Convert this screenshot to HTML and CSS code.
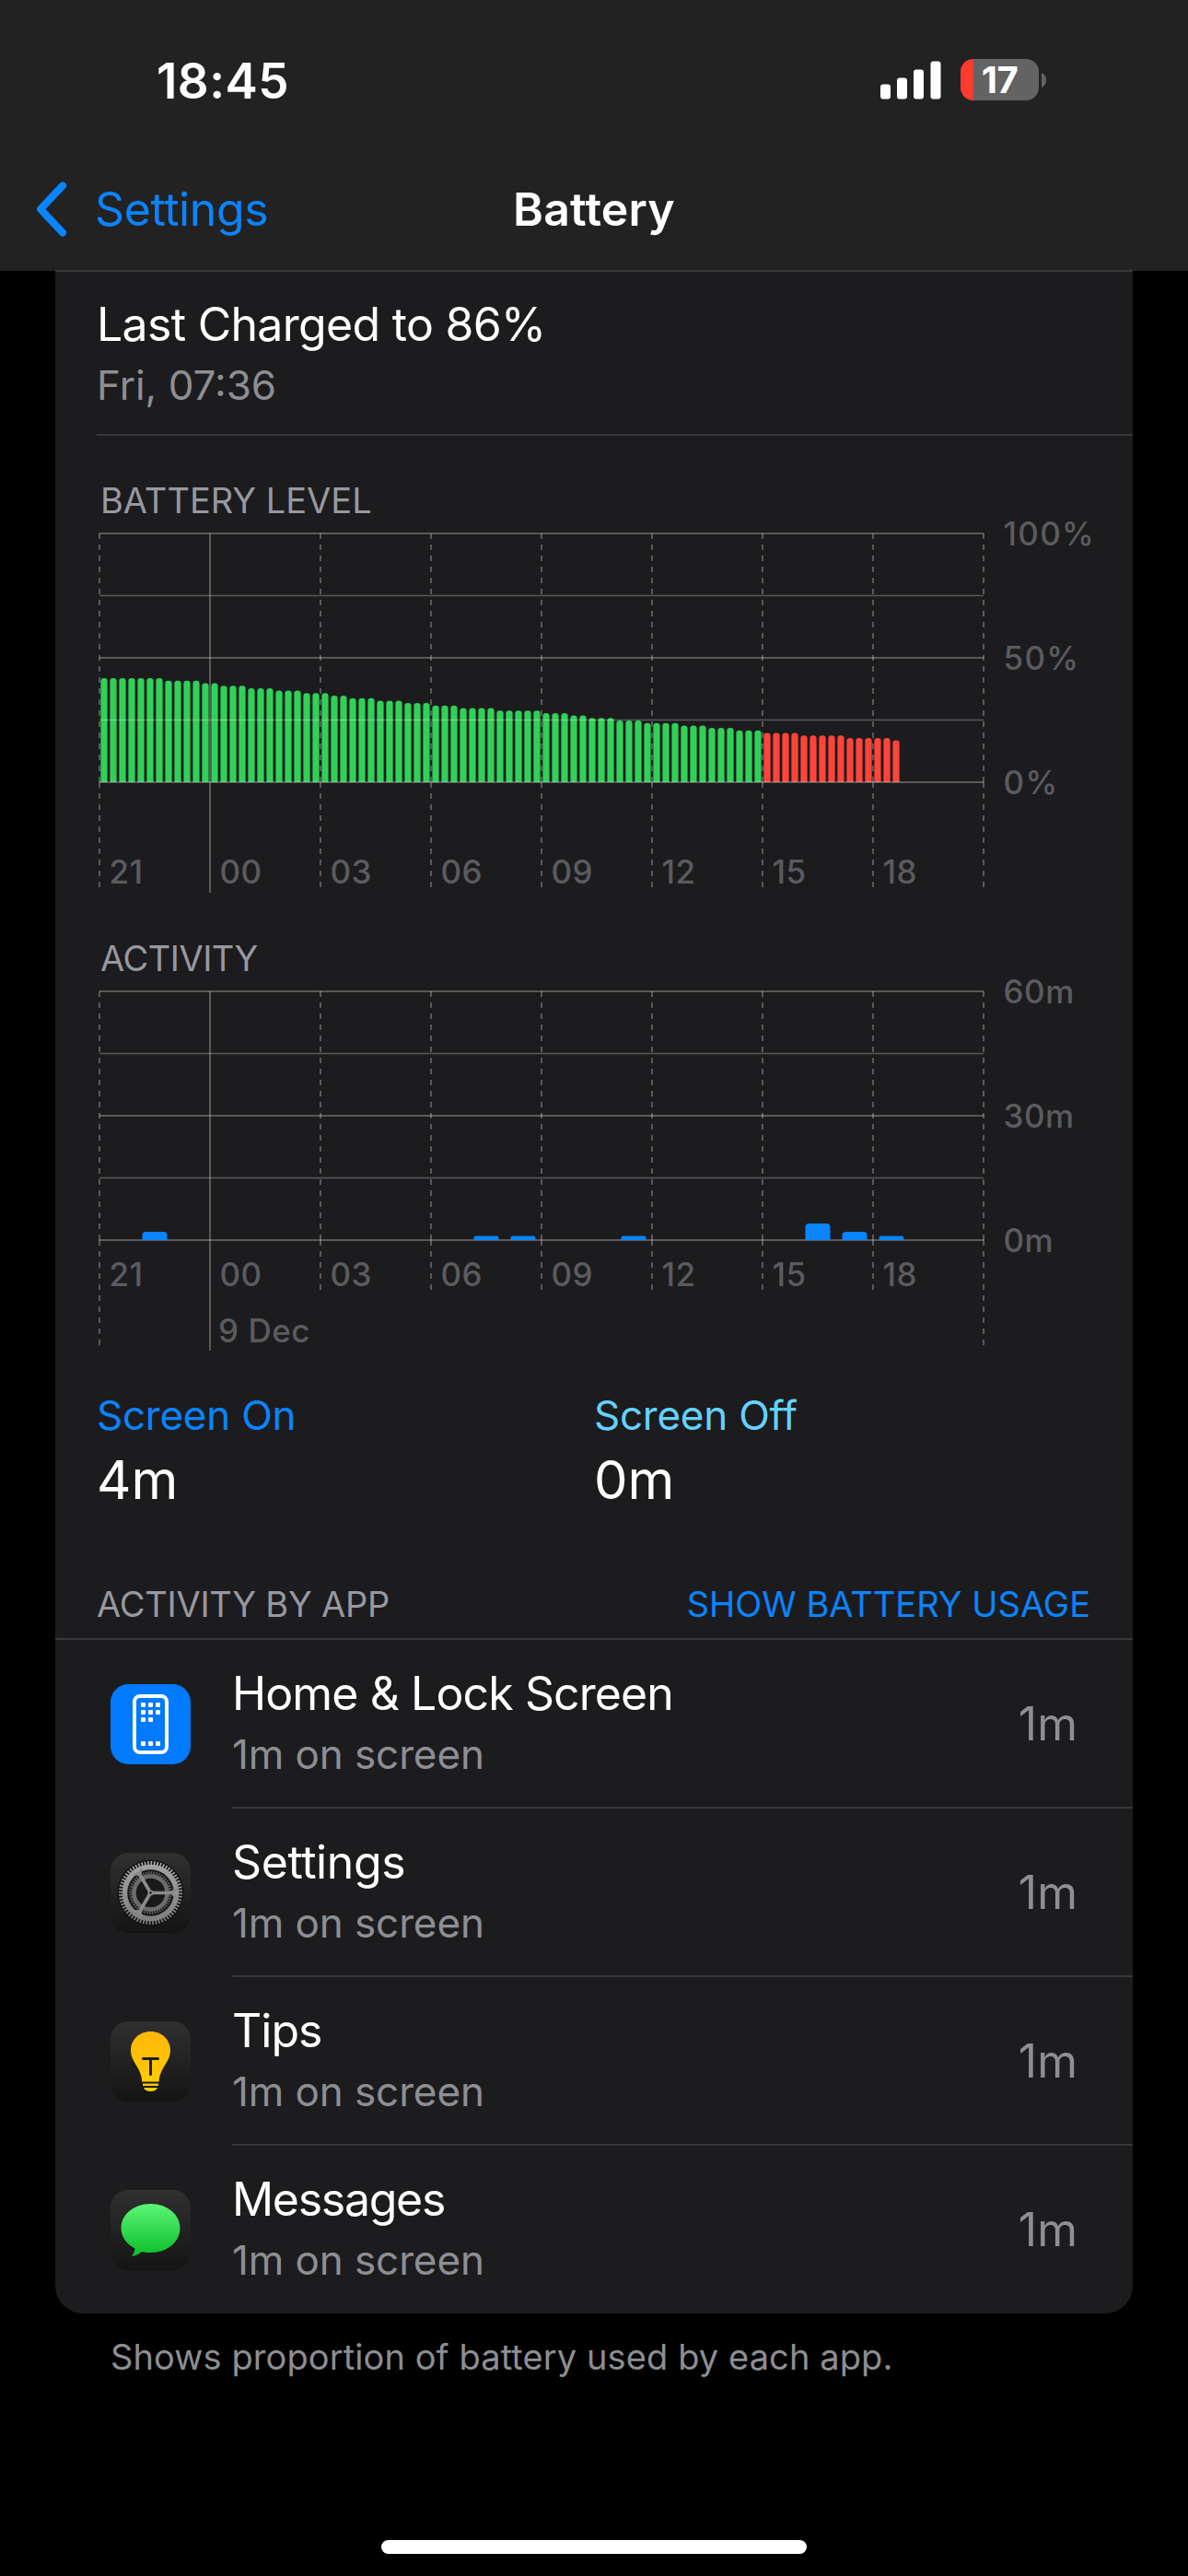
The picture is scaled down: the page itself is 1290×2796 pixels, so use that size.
FILE: index.html
```html
<!DOCTYPE html>
<html lang="en">
<head>
<meta charset="utf-8">
<title>Battery</title>
<link rel="stylesheet" href="styles.css">
</head>
<body>
<div class="screen">
  <header class="top">
    <div class="status">
      <span class="clock">18:45</span>
      <div class="status-icons">
        <svg class="signal" width="66" height="42" viewBox="0 0 66 42" fill="#fff">
          <rect x="0" y="25.500" width="11" height="16" rx="3"/>
          <rect x="18" y="18.500" width="11" height="23" rx="3"/>
          <rect x="36" y="9.500" width="11" height="32" rx="3"/>
          <rect x="54.500" y="0.500" width="11" height="41" rx="3"/>
        </svg>
        <div class="battery"><span class="charge">17</span></div>
        <svg class="nub" width="5" height="16" viewBox="0 0 5 16"><path d="M0 0C3.500 1.500 5 4.500 5 8S3.500 14.500 0 16Z" fill="#636363"/></svg>
      </div>
    </div>
    <nav class="nav">
      <a class="back">
        <svg width="36" height="60" viewBox="0 0 36 60"><path d="M30 4.500 6 30 30 55.500" fill="none" stroke="#0a84ff" stroke-width="8" stroke-linecap="round" stroke-linejoin="round"/></svg>
        <span class="t-back">Settings</span>
      </a>
      <h1 class="title">Battery</h1>
      <span></span>
    </nav>
  </header>

  <main class="card">
    <section class="charged">
      <div class="headline t-charged">Last Charged to 86%</div>
      <div class="sub">Fri, 07:36</div>
    </section>

    <section class="charts">
      <h2 class="caption">BATTERY LEVEL</h2>
      <svg class="chart level-chart" id="level" width="1125" height="419" viewBox="105 565 1125 419"></svg>
      <h2 class="caption t-activity">ACTIVITY</h2>
      <svg class="chart activity-chart" id="activity" width="1125" height="420" viewBox="105 1062 1125 420"></svg>
    </section>

    <section class="totals">
      <div class="total">
        <div class="sub on">Screen On</div>
        <div class="amount">4m</div>
      </div>
      <div class="total">
        <div class="sub off">Screen Off</div>
        <div class="amount">0m</div>
      </div>
    </section>

    <section class="apps">
      <div class="apps-head">
        <h2 class="caption t-byapp">ACTIVITY BY APP</h2>
        <a class="caption link">SHOW BATTERY USAGE</a>
      </div>
      <ul class="list">
        <li class="row">
          <svg class="icon" viewBox="0 0 87 87">
            <rect width="87" height="87" rx="19.500" fill="#007aff"/>
            <rect x="26" y="13" width="35" height="61" rx="6" fill="none" stroke="#fff" stroke-width="4"/>
            <g fill="#fff">
              <rect x="33" y="20" width="5" height="5" rx="1"/><rect x="41" y="20" width="5" height="5" rx="1"/><rect x="49" y="20" width="5" height="5" rx="1"/>
              <rect x="33" y="28" width="5" height="5" rx="1"/><rect x="41" y="28" width="5" height="5" rx="1"/><rect x="49" y="28" width="5" height="5" rx="1"/>
              <rect x="33" y="36" width="5" height="5" rx="1"/><rect x="41" y="36" width="5" height="5" rx="1"/>
              <rect x="33" y="62" width="5" height="5" rx="1"/><rect x="41" y="62" width="5" height="5" rx="1"/><rect x="49" y="62" width="5" height="5" rx="1"/>
            </g>
          </svg>
          <div class="row-body">
            <div class="row-text"><div class="headline t-home">Home &amp; Lock Screen</div><div class="sub t-on">1m on screen</div></div>
            <div class="value">1m</div>
          </div>
        </li>
        <li class="row">
          <svg class="icon" viewBox="0 0 87 87">
            <defs>
              <linearGradient id="tile" x1="0" y1="0" x2="0" y2="1"><stop offset="0" stop-color="#303030"/><stop offset="1" stop-color="#141414"/></linearGradient>
              <linearGradient id="steel" gradientUnits="userSpaceOnUse" x1="0" y1="8" x2="0" y2="79"><stop offset="0" stop-color="#a6a6a6"/><stop offset="1" stop-color="#7c7c7c"/></linearGradient>
            </defs>
            <rect width="87" height="87" rx="19.500" fill="url(#tile)"/>
            <circle cx="43.500" cy="43.500" r="36" fill="#111"/>
            <circle cx="43.500" cy="43.500" r="27.500" fill="#191919"/>
            <g fill="none" stroke="url(#steel)">
              <circle cx="43.500" cy="43.500" r="21.500" stroke="#5c5c5c" stroke-width="3.500" stroke-dasharray="1.500 1.300"/>
              <circle cx="43.500" cy="43.500" r="18" stroke="#6c6c6c" stroke-width="4.500"/>
              <circle cx="43.500" cy="43.500" r="32" stroke-width="5" pathLength="120" stroke-dasharray="1 1"/>
              <circle cx="43.500" cy="43.500" r="28" stroke-width="5.500"/>
              <path d="M43.500 43.500 70 43.500M43.500 43.500 30 20.500M43.500 43.500 30 66.500" stroke-width="3.600" stroke="#8c8c8c"/>
              <path d="M72 38 66 43.500 72 49M25 23.500 32 23.500 34 17M25 63.500 32 63.500 34 70" stroke-width="2.400" stroke="#8a8a8a"/>
            </g>
            <circle cx="43.500" cy="43.500" r="3" fill="#8c8c8c"/>
            <circle cx="43.500" cy="43.500" r="1.300" fill="#1a1a1a"/>
          </svg>
          <div class="row-body">
            <div class="row-text"><div class="headline t-settings">Settings</div><div class="sub t-on">1m on screen</div></div>
            <div class="value">1m</div>
          </div>
        </li>
        <li class="row">
          <svg class="icon" viewBox="0 0 87 87">
            <defs><linearGradient id="amber" x1="0" y1="0" x2="0" y2="1"><stop offset="0" stop-color="#ffb50a"/><stop offset="1" stop-color="#ffcc00"/></linearGradient></defs>
            <rect width="87" height="87" rx="19.500" fill="url(#tile)"/>
            <path d="M43.500 11C31 11 22 20 22 31.500C22 44 33.500 50 34.300 65.500H52.700C53.500 50 65 44 65 31.500C65 20 56 11 43.500 11Z" fill="url(#amber)"/>
            <path d="M35 67.500H52V70H35ZM36 72H51C50 74.700 47 76 43.500 76S37 74.700 36 72Z" fill="#ffcc00"/>
            <path d="M35.500 40.500H51.500M43.500 40.500V57.500" fill="none" stroke="#211f18" stroke-width="3" stroke-linecap="round"/>
          </svg>
          <div class="row-body">
            <div class="row-text"><div class="headline t-tips">Tips</div><div class="sub t-on">1m on screen</div></div>
            <div class="value">1m</div>
          </div>
        </li>
        <li class="row">
          <svg class="icon" viewBox="0 0 87 87">
            <defs><linearGradient id="mint" x1="0" y1="0" x2="0" y2="1"><stop offset="0" stop-color="#5bf675"/><stop offset="1" stop-color="#0bbd29"/></linearGradient></defs>
            <rect width="87" height="87" rx="19.500" fill="url(#tile)"/>
            <path d="M43.500 15C25.500 15 11.500 26.500 11.500 41.500C11.500 50.500 17 58.500 26.500 63.500C26.500 66.500 25 69.500 22.800 72C27.500 71.500 31 69.500 34 67C37 67.600 40 68 43.500 68C61.500 68 75.500 56.500 75.500 41.500S61.500 15 43.500 15Z" fill="url(#mint)"/>
          </svg>
          <div class="row-body">
            <div class="row-text"><div class="headline t-messages">Messages</div><div class="sub t-on">1m on screen</div></div>
            <div class="value">1m</div>
          </div>
        </li>
      </ul>
    </section>
  </main>

  <p class="note">Shows proportion of battery used by each app.</p>
  <div class="home-bar"></div>
</div>
<script src="charts.js"></script>
</body>
</html>
```
FILE: styles.css
```css
* { box-sizing: border-box; margin: 0; padding: 0; }
html, body { background: #000; }
body {
  width: 1290px;
  font-family: Inter, "Liberation Sans", sans-serif;
  color: #fff;
  font-weight: 400;
  -webkit-font-smoothing: antialiased;
}
.screen {
  width: 1290px;
  height: 2796px;
  display: flex;
  flex-direction: column;
  align-items: center;
  overflow: hidden;
}

/* header */
.top { width: 100%; height: 294px; flex: none; background: #222; }
.status {
  height: 176px;
  padding: 0 154px 0 170px;
  display: flex;
  justify-content: space-between;
  align-items: flex-start;
}
.clock { margin-top: 56px; font-size: 53px; line-height: 64px; font-weight: 600; letter-spacing: 0.4px; }
.status-icons { margin-top: 64px; height: 45px; display: flex; align-items: center; }
.signal { margin-right: 21px; }
.battery {
  width: 85px;
  height: 45px;
  border-radius: 14px;
  background: linear-gradient(90deg, #ff3b30 14.500px, #636363 14.500px);
  display: flex;
  align-items: center;
  justify-content: center;
}
.charge { font-size: 40px; line-height: 45px; font-weight: 700; letter-spacing: -0.5px; }
.nub { margin-left: 3px; }
.nav {
  height: 102px;
  display: grid;
  grid-template-columns: 1fr auto 1fr;
  align-items: center;
  padding: 0 38px;
}
.back { display: flex; align-items: center; gap: 29px; color: #0a84ff; font-size: 50px; line-height: 60px; letter-spacing: -0.4px; }
.title { font-size: 50px; line-height: 60px; font-weight: 600; letter-spacing: 0.2px; }

/* card */
.card {
  width: 1170px;
  height: 2218px;
  flex: none;
  margin-top: -1px;
  background: #1c1c1e;
  border-top: 2px solid #38383a;
  border-radius: 0 0 30px 30px;
  display: flex;
  flex-direction: column;
}
.headline { font-size: 50px; line-height: 60px; white-space: nowrap; }
.sub { font-size: 44px; line-height: 54px; color: #8e8e93; white-space: nowrap; }
.caption { font-size: 38px; line-height: 46px; font-weight: 400; color: #98989f; white-space: nowrap; }
.t-charged { letter-spacing: -0.7px; }
.t-activity { letter-spacing: -0.5px; }
.t-byapp { letter-spacing: -0.25px; }
.t-home { letter-spacing: -0.9px; }
.t-settings { letter-spacing: -0.4px; }
.t-tips { letter-spacing: -1px; }
.t-messages { letter-spacing: -1.3px; }
.t-on { letter-spacing: -0.1px; }

.charged { height: 178px; margin-left: 45px; padding: 27px 0 0; border-bottom: 2px solid #38383a; }
.charged .sub { margin-top: 9px; }

.charts { padding: 47px 0 0 45px; }
.charts .caption { padding-left: 4px; }
.chart { display: block; overflow: visible; }
.level-chart { margin-top: -1px; margin-bottom: 33px; }
.activity-chart { margin-top: -1px; margin-bottom: 27px; }
.grid { stroke: #fff; stroke-opacity: 0.27; fill: none; stroke-width: 2; }
.dashed { stroke-dasharray: 6 6; }
.minor { stroke-width: 1.300; }
.axis { font-size: 35px; font-weight: 500; fill: #5b5b5f; letter-spacing: 0.5px; }
.percent { letter-spacing: 1.3px; }
.green { fill: #30d158; }
.red { fill: #ff453a; }
.blue { fill: #0a84ff; }

.totals { display: grid; grid-template-columns: 540px 1fr; padding-left: 45px; }
.totals .sub { letter-spacing: -0.25px; }
.totals .on { color: #0a84ff; }
.totals .off { color: #64d2ff; }
.amount { font-size: 58px; line-height: 70px; margin-top: 8px; }

.apps { margin-top: auto; }
.apps-head {
  display: flex;
  justify-content: space-between;
  padding: 0 46px 14px 45px;
  border-bottom: 2px solid #38383a;
}
.apps-head .link { color: #0a84ff; }
.list { list-style: none; }
.row { height: 183px; display: flex; align-items: center; padding-left: 60px; }
.row:last-child { height: 182px; }
.icon { width: 87px; height: 87px; flex: none; }
.row-body {
  flex: 1;
  height: 100%;
  margin-left: 45px;
  padding-right: 60px;
  display: flex;
  justify-content: space-between;
  border-bottom: 2px solid #38383a;
}
.row:last-child .row-body { border-bottom: 0; }
.row-text { padding-top: 28px; }
.row-text .sub { margin-top: 9px; }
.value { margin-top: 61px; font-size: 50px; line-height: 60px; color: #8e8e93; }

.note { align-self: flex-start; margin: 22px 0 0 120px; font-size: 38px; line-height: 50px; letter-spacing: 0.1px; color: #8e8e93; white-space: nowrap; }
.home-bar { width: 462px; height: 15px; margin-top: auto; margin-bottom: 24px; flex: none; border-radius: 8px; background: #fff; }
```
FILE: charts.js
```js
const NS = "http://www.w3.org/2000/svg";
const LEFT = 108, RIGHT = 1068, HOURS = ["21", "00", "03", "06", "09", "12", "15", "18"];

function add(svg, name, attrs, text) {
  const el = document.createElementNS(NS, name);
  for (const key in attrs) el.setAttribute(key, attrs[key]);
  if (text) el.textContent = text;
  svg.append(el);
}

/* The dashes restart at the base line, below which the ticks run past the labels. */
function grid(svg, top, dashEnd, edgeEnd, solidEnd) {
  const base = top + 270;
  for (let i = 0; i < 5; i++) {
    const y = top + i * 67.5;
    add(svg, "path", { class: i % 2 ? "grid minor" : "grid", d: `M${LEFT} ${y}H${RIGHT}` });
  }
  for (let i = 0; i < 9; i++) {
    const x = LEFT + i * 120;
    const end = i === 1 ? solidEnd : i === 0 || i === 8 ? edgeEnd : dashEnd;
    add(svg, "path", { class: i === 1 ? "grid" : "grid dashed", d: `M${x} ${top}V${base}M${x} ${base}V${end}` });
  }
}

function labels(svg, top, hourBase, side, sideClass) {
  HOURS.forEach((h, i) => add(svg, "text", { class: "axis", x: LEFT + i * 120 + 10.5, y: hourBase }, h));
  side.forEach((s, i) => add(svg, "text", { class: sideClass, x: 1089.5, y: top + i * 135 + 13 }, s));
}

/* Charge readings every 15 minutes, as [percent, count]. */
const runs = [[42, 7], [41, 4], [40, 2], [39, 3], [38, 3], [37, 3], [36, 3], [35, 2], [34, 3], [33, 3],
  [32, 3], [31, 3], [30, 4], [29, 5], [28, 3], [27, 2], [26, 3], [25, 3], [24, 4], [23, 3], [22, 3],
  [21, 3], [20, 4], [19, 5], [18, 5], [17, 1]];
const level = document.getElementById("level");
let n = 0;
for (const [pct, count] of runs) {
  for (let i = 0; i < count; i++, n++) {
    const x = 109.4 + n * 10, y = 849.5 - pct * 2.7;
    add(level, "path", {
      class: pct > 20 ? "green" : "red",
      d: `M${x} 849V${y + 3.2}a3.6 3.2 0 0 1 7.2 0V849Z`
    });
  }
}
grid(level, 579, 963, 963, 969);
labels(level, 579, 959, ["100%", "50%", "0%"], "axis percent");

/* Minutes of use, keyed by hour slot. */
const minutes = { 1: 2, 10: 1, 11: 1, 14: 1, 19: 4, 20: 2, 21: 1 };
const activity = document.getElementById("activity");
grid(activity, 1076, 1400, 1460, 1466);
for (const slot in minutes) {
  const h = minutes[slot] * 4.5, x = LEFT + slot * 40 + 6.5, r = Math.min(4, h / 2);
  add(activity, "path", {
    class: "blue",
    d: `M${x} 1346V${1346 - h + r}a${r} ${r} 0 0 1 ${r} ${-r}h${27 - 2 * r}a${r} ${r} 0 0 1 ${r} ${r}V1346Z`
  });
}
labels(activity, 1076, 1396, ["60m", "30m", "0m"], "axis");
add(activity, "text", { class: "axis", x: 237, y: 1457 }, "9 Dec");
```
